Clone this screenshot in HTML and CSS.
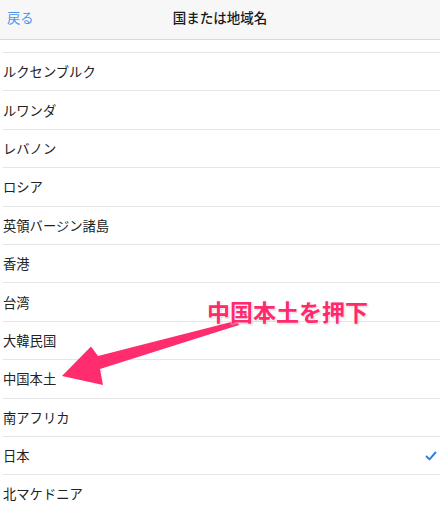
FILE: index.html
```html
<!DOCTYPE html>
<html lang="ja">
<head>
<meta charset="utf-8">
<link rel="stylesheet" href="styles.css">
</head>
<body>
<div class="page">
  <header class="nav">
    <span class="back">戻る</span>
    <span class="title">国または地域名</span>
  </header>
  <ul class="list">
    <li class="row">ルクセンブルク</li>
    <li class="row">ルワンダ</li>
    <li class="row">レバノン</li>
    <li class="row">ロシア</li>
    <li class="row">英領バージン諸島</li>
    <li class="row">香港</li>
    <li class="row">台湾</li>
    <li class="row">大韓民国</li>
    <li class="row">中国本土</li>
    <li class="row">南アフリカ</li>
    <li class="row">日本<svg class="check" width="12" height="10" viewBox="0 0 12 10"><path d="M1.5 5.5 L4.5 8.3 L10.5 1.5" fill="none" stroke="#2a7ef2" stroke-width="1.9" stroke-linecap="round" stroke-linejoin="round"/></svg></li>
    <li class="row">北マケドニア</li>
  </ul>
  <svg class="arrow" width="440" height="512" viewBox="0 0 440 512">
    <polygon points="237,320.5 98,356 91,346.5 62,376 103,385 100,369 239,325" fill="#ff2d6e"/>
  </svg>
  <div class="callout">中国本土を押下</div>
</div>
</body>
</html>
```
FILE: styles.css
```css
html, body {
  margin: 0;
  padding: 0;
  background: #ffffff;
}
.page {
  position: relative;
  width: 440px;
  height: 512px;
  overflow: hidden;
  font-family: "Noto Sans CJK JP", "Noto Sans", sans-serif;
}
.nav {
  height: 40px;
  box-sizing: border-box;
  background: #f7f7f8;
  border-bottom: 1px solid #dadadc;
  display: flex;
  align-items: center;
  justify-content: center;
  position: relative;
  padding-bottom: 6px;
}
.back {
  position: absolute;
  left: 7px;
  top: 8px;
  font-size: 13.3px;
  color: #4b93ec;
}
.title {
  font-size: 13.5px;
  font-weight: 500;
  color: #1a1a1a;
}
.list {
  list-style: none;
  margin: 0 0 0 3px;
  padding: 12px 0 0 0;
}
.row {
  height: 38.4px;
  box-sizing: border-box;
  border-top: 1px solid #e6e6e8;
  display: flex;
  align-items: center;
  justify-content: space-between;
  font-size: 13.3px;
  color: #222222;
  padding-right: 3px;
}
.check {
  display: block;
}
.arrow {
  position: absolute;
  left: 0;
  top: 0;
  pointer-events: none;
}
.callout {
  position: absolute;
  left: 207px;
  top: 296px;
  font-size: 23px;
  font-weight: 700;
  color: #ff2a6d;
  line-height: 30px;
  text-shadow: 0 0 2px #fff, 0 0 2px #fff, 1px 1px 2px rgba(0,0,0,0.25);
}
```
